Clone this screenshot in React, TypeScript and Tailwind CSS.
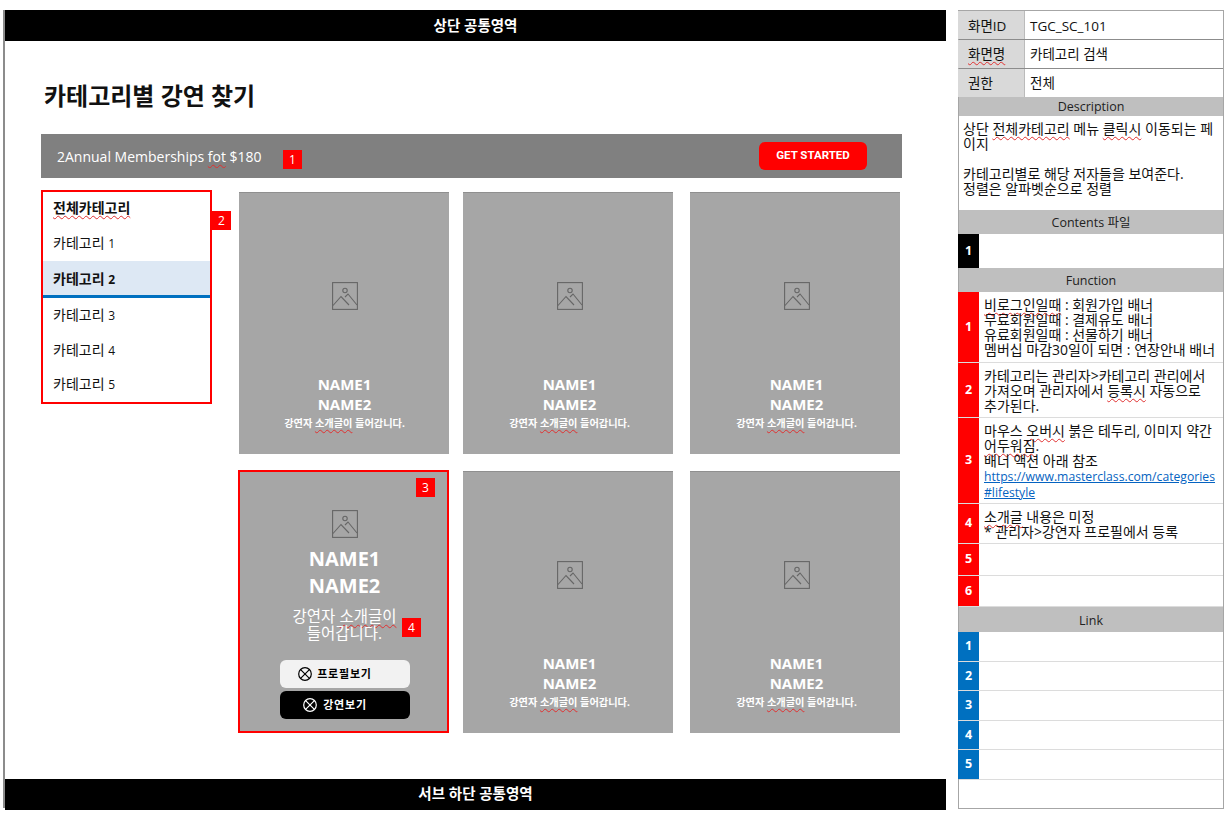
const Wavy = ({ children }: { children: React.ReactNode }) => (
  <span className="underline decoration-wavy decoration-[#e03030] decoration-1 underline-offset-2">{children}</span>
);

const Badge = ({ className, children }: { className: string; children: React.ReactNode }) => (
  <div className={`absolute w-[19px] h-[19px] bg-[#ff0000] text-white text-[12px] flex items-center justify-center ${className}`}>{children}</div>
);

const ImageIcon = () => (
  <svg width="26" height="28" viewBox="0 0 26 28" fill="none" stroke="#666" strokeWidth="1.1">
    <rect x="0.6" y="0.6" width="24.8" height="26.8" />
    <circle cx="13" cy="8.5" r="2.2" />
    <path d="M1 23.5 L9 14.5 L17 23" />
    <path d="M13 15 L16 12 L25 23" />
  </svg>
);

const CrossCircle = ({ color }: { color: string }) => (
  <svg width="14" height="14" viewBox="0 0 14 14" fill="none" stroke={color} strokeWidth="1.2">
    <circle cx="7" cy="7" r="6.3" />
    <path d="M2.6 2.6 L11.4 11.4 M11.4 2.6 L2.6 11.4" />
  </svg>
);

const Card = ({ className = "pl-[1px]" }: { className?: string }) => (
  <div className={`w-[210px] h-[262px] bg-[#a6a6a6] border-t border-[#8f8f8f] flex flex-col items-center pt-[89px] text-white ${className}`}>
    <ImageIcon />
    <div className="mt-[64px] text-[15px] font-bold leading-[20px] text-center">
      NAME1
      <br />
      NAME2
    </div>
    <div className="text-[10.2px] font-bold leading-[18px]">
      강연자 <Wavy>소개글이</Wavy> 들어갑니다.
    </div>
  </div>
);

const HoverCard = () => (
  <div className="relative w-[211px] h-[263px] -mt-[1px] -ml-[1px] bg-[#a6a6a6] border-2 border-[#ff0000] flex flex-col items-center pl-[2px] pt-[38px] text-white">
    <Badge className="right-[12px] top-[6px]">3</Badge>
    <ImageIcon />
    <div className="mt-[7px] text-[20px] font-bold leading-[27px] text-center">
      NAME1
      <br />
      NAME2
    </div>
    <div className="mt-[9px] text-[15.5px] leading-[17px] text-center">
      강연자 <Wavy>소개글이</Wavy>
      <br />
      들어갑니다.
    </div>
    <Badge className="left-[162px] top-[146px]">4</Badge>
    <div className="mt-[18px] w-[130px] h-[28px] rounded-[6px] bg-[#f2f2f2] text-black text-[11px] tracking-[0.8px] font-bold flex items-center justify-center gap-[5px] pr-[19px]">
      <CrossCircle color="#000" />
      프로필보기
    </div>
    <div className="mt-[3px] w-[130px] h-[28px] rounded-[6px] bg-black text-white text-[11px] tracking-[0.8px] font-bold flex items-center justify-center gap-[6px] pr-[19px]">
      <CrossCircle color="#fff" />
      강연보기
    </div>
  </div>
);

const SectionHead = ({ h, pt = "pt-[3px]", children }: { h: string; pt?: string; children: React.ReactNode }) => (
  <div className={`${h} ${pt} bg-[#bfbfbf] flex items-center justify-center text-[12.5px] text-[#222]`}>{children}</div>
);

const MetaRow = ({ label, value, h, pt, wavy }: { label: string; value: string; h: string; pt: string; wavy?: boolean }) => (
  <div className={`${h} flex border-b border-[#8c8c8c] last:border-b-0 text-[13.5px]`}>
    <div className={`-ml-px w-[67px] bg-[#d9d9d9] border-r border-[#bbb] flex items-center pl-[10px] ${pt}`}>
      {wavy ? <Wavy>{label}</Wavy> : label}
    </div>
    <div className={`flex-1 pl-[5px] flex items-center ${pt}`}>{value}</div>
  </div>
);

const NumRow = ({ n, h, color, children }: { n: number; h: string; color: string; children?: React.ReactNode }) => (
  <div className={`${h} flex border-b border-[#dcdcdc]`}>
    <div className={`-ml-px w-[21px] ${color} text-white text-[12.5px] font-bold flex items-center justify-center`}>{n}</div>
    <div className="flex-1 pl-[5px] pt-[5px] text-[14px] leading-[15px] text-[#111]">{children}</div>
  </div>
);

const sideRow = "pl-[10px] pb-[3px] flex items-center";

const SideLabel = ({ n }: { n: number }) => (
  <span>
    카테고리 <span className="text-[12px]">{n}</span>
  </span>
);

export default function App() {
  return (
    <div className="w-[1231px] h-[816px] bg-white flex items-start font-['Open_Sans','Noto_Sans_CJK_KR',sans-serif] text-[#111]">
      {/* wireframe */}
      <div className="ml-[3px] mt-[10px] w-[943px] h-[798px] border-l-2 border-t border-b border-[#8c8c8c] flex flex-col">
        <div className="-mt-px h-[31px] bg-black text-white text-[14.5px] font-bold flex items-center justify-center shrink-0">상단 공통영역</div>

        <div className="flex-1 pl-[36px] relative">
          <h1 className="mt-[38px] ml-[3px] text-[24px] font-bold leading-[34px] text-[#111]">카테고리별 강연 찾기</h1>

          <div className="relative mt-[21px] w-[861px] h-[44px] bg-[#808080] pl-[16px] pr-[35px] flex items-center justify-between">
            <span className="text-white text-[14px]">
              2Annual Memberships <Wavy>fot</Wavy> $180
            </span>
            <Badge className="left-[242px] top-[16px]">1</Badge>
            <div className="w-[108px] h-[28px] bg-[#ff0000] rounded-[6px] text-white text-[11.5px] font-bold font-['Roboto',sans-serif] flex items-center justify-center">GET STARTED</div>
          </div>

          <div className="flex mt-[12px]">
            <div className="relative w-[171px] h-[214px] border-2 border-[#ff0000] text-[14px]">
              <Badge className="left-[169px] top-[19px]">2</Badge>
              <div className={`h-[34px] font-bold ${sideRow}`}><Wavy>전체카테고리</Wavy></div>
              <div className={`h-[35px] ${sideRow}`}><SideLabel n={1} /></div>
              <div className="h-[37px] pl-[10px] flex items-center font-bold bg-[#dde8f4] border-b-[3px] border-[#0070c0]"><SideLabel n={2} /></div>
              <div className={`h-[35px] ${sideRow}`}><SideLabel n={3} /></div>
              <div className={`h-[35px] ${sideRow}`}><SideLabel n={4} /></div>
              <div className={`h-[34px] ${sideRow}`}><SideLabel n={5} /></div>
            </div>

            <div className="ml-[27px] mt-[2px] flex flex-col gap-[17px]">
              <div className="flex">
                <Card />
                <Card className="ml-[14px] pl-[3px]" />
                <Card className="ml-[17px] pl-[3px]" />
              </div>
              <div className="flex">
                <HoverCard />
                <Card className="ml-[14px] pl-[3px]" />
                <Card className="ml-[17px] pl-[3px]" />
              </div>
            </div>
          </div>
        </div>

        <div className="-mb-[3px] h-[31px] pb-[2px] bg-black text-white text-[14.5px] font-bold flex items-center justify-center shrink-0">서브 하단 공통영역</div>
      </div>

      {/* description panel */}
      <div className="ml-[12px] mt-[10px] w-[266px] h-[799px] border border-[#a6a6a6] flex flex-col">
        <div className="flex flex-col">
          <MetaRow label="화면ID" value="TGC_SC_101" h="h-[29px]" pt="pt-[3px]" />
          <MetaRow label="화면명" value="카테고리 검색" h="h-[29px]" pt="pt-[1px]" wavy />
          <MetaRow label="권한" value="전체" h="h-[28px]" pt="pt-0" />
        </div>
        <SectionHead h="h-[19px]" pt="pt-[2px]">Description</SectionHead>
        <div className="h-[94px] pl-[4px] pr-[2px] pt-[5px] text-[14px] leading-[15px]">
          상단 <Wavy>전체카테고리</Wavy> 메뉴 <Wavy>클릭시</Wavy> 이동되는 페이지
          <br />
          <br />
          카테고리별로 해당 저자들을 보여준다.
          <br />
          정렬은 알파벳순으로 정렬
        </div>
        <SectionHead h="h-[24px]">Contents 파일</SectionHead>
        <div className="h-[34px] flex">
          <div className="-ml-px w-[21px] bg-black text-white text-[12.5px] font-bold flex items-center justify-center">1</div>
        </div>
        <SectionHead h="h-[24px]">Function</SectionHead>
        <NumRow n={1} h="h-[71px]" color="bg-[#ff0000]">
          <Wavy>비로그인일때</Wavy> : 회원가입 배너
          <br />
          무료회원일때 : 결제유도 배너
          <br />
          유료회원일때 : 선물하기 배너
          <br />
          멤버십 마감30일이 되면 : 연장안내 배너
        </NumRow>
        <NumRow n={2} h="h-[55px]" color="bg-[#ff0000]">
          카테고리는 관리자&gt;카테고리 관리에서
          <br />
          가져오며 관리자에서 <Wavy>등록시</Wavy> 자동으로
          <br />
          추가된다.
        </NumRow>
        <NumRow n={3} h="h-[86px]" color="bg-[#ff0000]">
          마우스 <Wavy>오버시</Wavy> 붉은 테두리, 이미지 약간
          <br />
          <Wavy>어두워짐</Wavy>.
          <br />
          배너 액션 아래 참조
          <br />
          <a className="text-[12.2px] text-[#0563c1] underline" href="#lifestyle">
            https://www.masterclass.com/categories
            <br />
            #lifestyle
          </a>
        </NumRow>
        <NumRow n={4} h="h-[40px]" color="bg-[#ff0000]">
          <Wavy>소개글</Wavy> 내용은 미정
          <br />* 관리자&gt;강연자 프로필에서 등록
        </NumRow>
        <NumRow n={5} h="h-[32px]" color="bg-[#ff0000]" />
        <NumRow n={6} h="h-[31px]" color="bg-[#ff0000]" />
        <SectionHead h="h-[25px]">Link</SectionHead>
        {[1, 2, 3, 4, 5].map((n) => (
          <NumRow key={n} n={n} h="h-[29.6px]" color="bg-[#0070c0]" />
        ))}
      </div>
    </div>
  );
}
